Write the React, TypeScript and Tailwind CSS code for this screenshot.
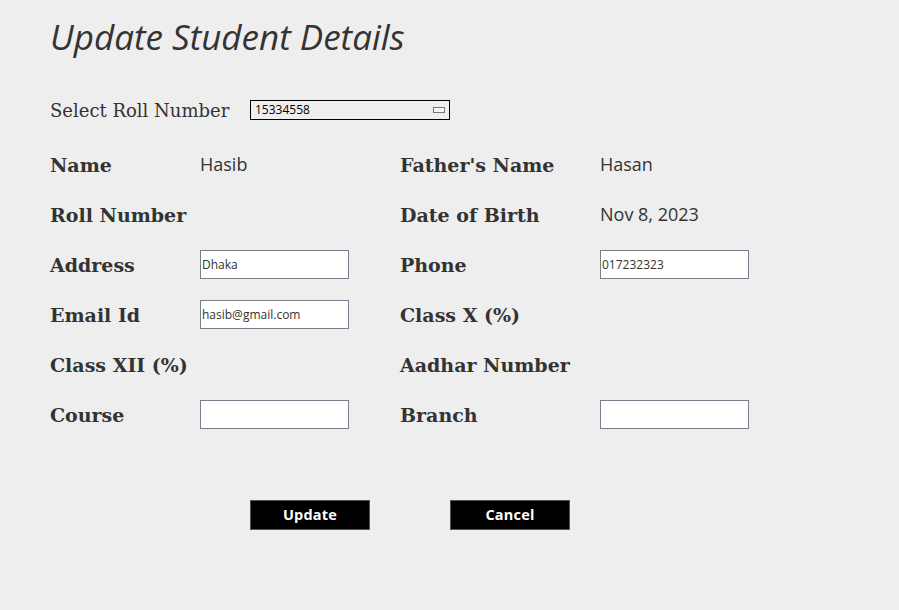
const fields: { label: string; value?: string; input?: string }[][] = [
  [{ label: "Name", value: "Hasib" }, { label: "Father's Name", value: "Hasan" }],
  [{ label: "Roll Number" }, { label: "Date of Birth", value: "Nov 8, 2023" }],
  [{ label: "Address", input: "Dhaka" }, { label: "Phone", input: "017232323" }],
  [{ label: "Email Id", input: "hasib@gmail.com" }, { label: "Class X (%)" }],
  [{ label: "Class XII (%)" }, { label: "Aadhar Number" }],
  [{ label: "Course", input: "" }, { label: "Branch", input: "" }],
];

function Cell({ f }: { f: { label: string; value?: string; input?: string } }) {
  return (
    <>
      <div className="flex items-center font-['DejaVu_Serif',serif] text-[19px] font-bold text-[#333]">
        {f.label}
      </div>
      <div className="flex items-center pb-[2px]">
        {f.input !== undefined ? (
          <input
            defaultValue={f.input}
            className="h-[29px] w-[149px] border border-[#767f8b] bg-white px-[1px] font-['Open_Sans',sans-serif] text-[12px] text-[#333] outline-none"
          />
        ) : (
          <span className="font-['Open_Sans',sans-serif] text-[18px] text-[#333]">{f.value}</span>
        )}
      </div>
    </>
  );
}

export default function App() {
  return (
    <div className="h-[610px] w-full bg-[#eeeeee] pl-[50px] pt-[14px] text-[#333]">
      <h1 className="font-['Open_Sans',sans-serif] text-[35px] italic leading-[46px] text-[#333]">
        Update Student Details
      </h1>

      <div className="mt-[40px] flex h-[20px] items-center">
        <span className="w-[200px] font-['DejaVu_Serif',serif] text-[18px] text-[#333]">Select Roll Number</span>
        <div className="flex h-[20px] w-[200px] items-center justify-between border border-black px-[4px] font-['Open_Sans',sans-serif] text-[12px] text-black">
          <span>15334558</span>
          <span className="h-[6px] w-[12px] border border-[#777] bg-[#f4f4f4]" />
        </div>
      </div>

      <div className="mt-[20px] grid grid-cols-[150px_200px_200px_200px] auto-rows-[50px]">
        {fields.map((row, i) => (
          <Cell key={`a${i}`} f={row[0]} />
        )).flatMap((c, i) => [c, <Cell key={`b${i}`} f={fields[i][1]} />])}
      </div>

      <div className="mt-[60px] flex gap-[80px] pl-[200px]">
        {["Update", "Cancel"].map((b) => (
          <button
            key={b}
            className="h-[30px] w-[120px] border border-[#555] bg-black font-['Open_Sans',sans-serif] text-[14.5px] font-bold tracking-[0.2px] text-white"
          >
            {b}
          </button>
        ))}
      </div>
    </div>
  );
}
